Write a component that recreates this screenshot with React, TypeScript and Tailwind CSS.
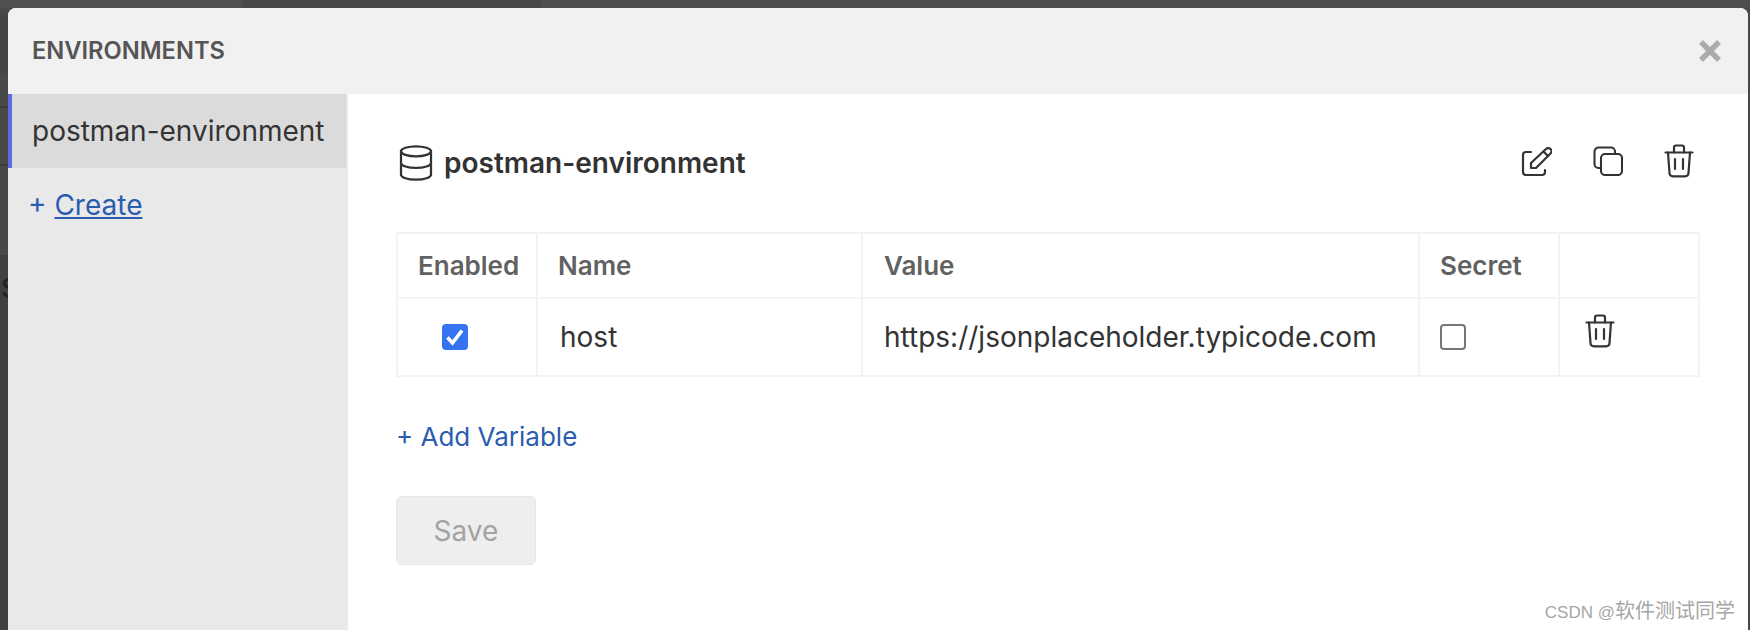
import { Database } from 'lucide-react';

function TrashIcon({ className }: { className?: string }) {
  return (
    <svg viewBox="0 0 30 34" fill="none" stroke="currentColor" strokeWidth="2.2" strokeLinecap="round" strokeLinejoin="round" className={className}>
      <path d="M1.500 8.500H28.500" />
      <path d="M10 8.500V3.500A2 2 0 0 1 12 1.500H18A2 2 0 0 1 20 3.500V8.500" />
      <path d="M4 8.500L5.500 29A3.500 3.500 0 0 0 9 32.300H21A3.500 3.500 0 0 0 24.500 29L26 8.500" />
      <path d="M11 15V25M19 15V25" />
    </svg>
  );
}

function EditIcon({ className }: { className?: string }) {
  return (
    <svg viewBox="0 0 32 32" fill="none" stroke="currentColor" strokeWidth="2.200" strokeLinecap="round" strokeLinejoin="round" className={className}>
      <path d="M11 7H6A3 3 0 0 0 3 10V27A3 3 0 0 0 6 30H22A3 3 0 0 0 25 27V25" />
      <path d="M11 18V23H16L30.500 8.500A3 3 0 0 0 26 4Z" />
      <path d="M23.500 6.500L28 11" />
    </svg>
  );
}

function CopyIcon({ className }: { className?: string }) {
  return (
    <svg viewBox="0 0 30 30" fill="none" stroke="currentColor" strokeWidth="2.100" className={className}>
      <rect x="8" y="8" width="21" height="21" rx="4" />
      <path d="M22 8V5.500A4 4 0 0 0 18 1.500H5.500A4 4 0 0 0 1.500 5.500V18A4 4 0 0 0 5.500 22H8" />
    </svg>
  );
}

export default function App() {
  return (
    <div className="relative h-[630px] w-[1750px] overflow-hidden bg-[#494949] pl-2 pt-2 pr-[2px] font-['Inter',sans-serif]">
      {/* dimmed page showing behind the modal */}
      <div className="absolute left-0 top-0 h-2 w-[242px] bg-[#505050]"></div>
      <div className="absolute right-0 top-0 h-2 w-[1209px] bg-[#4e4e4e]"></div>
      <div className="absolute left-0 top-[15px] h-[58px] w-2 bg-[#444444]"></div>
      <div className="absolute left-0 top-[106px] h-[2px] w-2 bg-[#3c3c3c]"></div>
      <div className="absolute left-0 top-[164px] h-[2px] w-2 bg-[#3c3c3c]"></div>
      <div className="absolute left-0 top-[255px] h-[375px] w-2 bg-[#404040]"></div>
      <span className="absolute left-[1px] top-[268px] font-['Inter',sans-serif] text-[26px] font-medium text-[#222222]">S</span>

      <div className="relative h-full overflow-hidden rounded-t-lg bg-white">
        <header className="flex h-[86px] items-center justify-between bg-[#f1f1f1] pl-[24px] pr-[27px]">
          <h1 className="text-[23.7px] font-semibold text-[#555555]">ENVIRONMENTS</h1>
          <svg viewBox="0 0 22 22" stroke="currentColor" strokeWidth="5.500" className="size-[22px] text-[#ababab]">
            <path d="M2 2L20 20M20 2L2 20" />
          </svg>
        </header>
        <div className="flex h-[536px]">
          <aside className="w-[340px] shrink-0 bg-[#e9e9e9]">
            <div className="mr-[2px] flex h-[74px] items-center border-l-4 border-[#5b6ee1] bg-[#dbdbdb] pl-[20px] text-[28px] text-[#333333]">
              postman-environment
            </div>
            <div className="mt-[16px] pl-[20px] text-[28px] text-[#2a5db0]">
              + <a className="underline">Create</a>
            </div>
          </aside>
          <main className="flex-1 pl-[48px] pr-[44px]">
            <div className="mb-[4px] flex h-[134px] items-center justify-between pr-[10px]">
              <div className="flex items-center gap-2 pt-[3px]">
                <Database size={40} strokeWidth={1.35} className="text-[#333333]" />
                <span className="text-[28px] font-semibold text-[#333333]">postman-environment</span>
              </div>
              <div className="flex items-center gap-[41px] text-[#333333]">
                <EditIcon className="size-8" />
                <CopyIcon className="size-[30px]" />
                <TrashIcon className="h-[34px] w-[30px]" />
              </div>
            </div>
            <table className="w-[1304px] table-fixed border-collapse text-[#333333]">
              <thead>
                <tr className="h-[65px] text-left text-[26px] font-semibold text-[#616161]">
                  <th className="w-[140px] border-2 border-[#f3f3f3] pl-[20px] font-semibold">Enabled</th>
                  <th className="w-[325px] border-2 border-[#f3f3f3] pl-[20px] font-semibold">Name</th>
                  <th className="w-[557px] border-2 border-[#f3f3f3] pl-[21px] font-semibold">Value</th>
                  <th className="w-[140px] border-2 border-[#f3f3f3] pl-[20px] font-semibold">Secret</th>
                  <th className="border-2 border-[#f3f3f3]"></th>
                </tr>
              </thead>
              <tbody>
                <tr className="h-[78px] text-[28px]">
                  <td className="border-2 border-[#f3f3f3] pl-[44px]">
                    <div className="flex size-[26px] items-center justify-center rounded-[4px] bg-[#3574f0]">
                      <svg viewBox="0 0 20 20" fill="none" stroke="white" strokeWidth="3.600" className="size-5">
                        <path d="M2.500 10.500L7.500 16L17 3.500" />
                      </svg>
                    </div>
                  </td>
                  <td className="border-2 border-[#f3f3f3] pl-[22px]">host</td>
                  <td className="border-2 border-[#f3f3f3] pl-[21px]">https://jsonplaceholder.typicode.com</td>
                  <td className="border-2 border-[#f3f3f3] pl-[20px]">
                    <div className="size-[26px] rounded-[4px] border-2 border-[#767676] bg-white"></div>
                  </td>
                  <td className="border-2 border-[#f3f3f3] pl-[25px] pb-[12px]">
                    <TrashIcon className="h-[34px] w-[30px]" />
                  </td>
                </tr>
              </tbody>
            </table>
            <div className="mt-[40px] text-[26px] text-[#2a5db0]">+ Add Variable</div>
            <button className="mt-[40px] block h-[69px] w-[140px] rounded-md border border-[#e6e6e6] bg-[#eeeeee] text-[28px] text-[#a3a3a3]">Save</button>
          </main>
        </div>
      </div>
      <span className="absolute bottom-[5px] right-[15px] flex items-baseline font-['Liberation_Sans',sans-serif] text-[17px] text-[#a6a6a6]">
        CSDN @<span className="font-['Noto_Sans_CJK_SC',sans-serif] text-[20px]">软件测试同学</span>
      </span>
    </div>
  );
}
